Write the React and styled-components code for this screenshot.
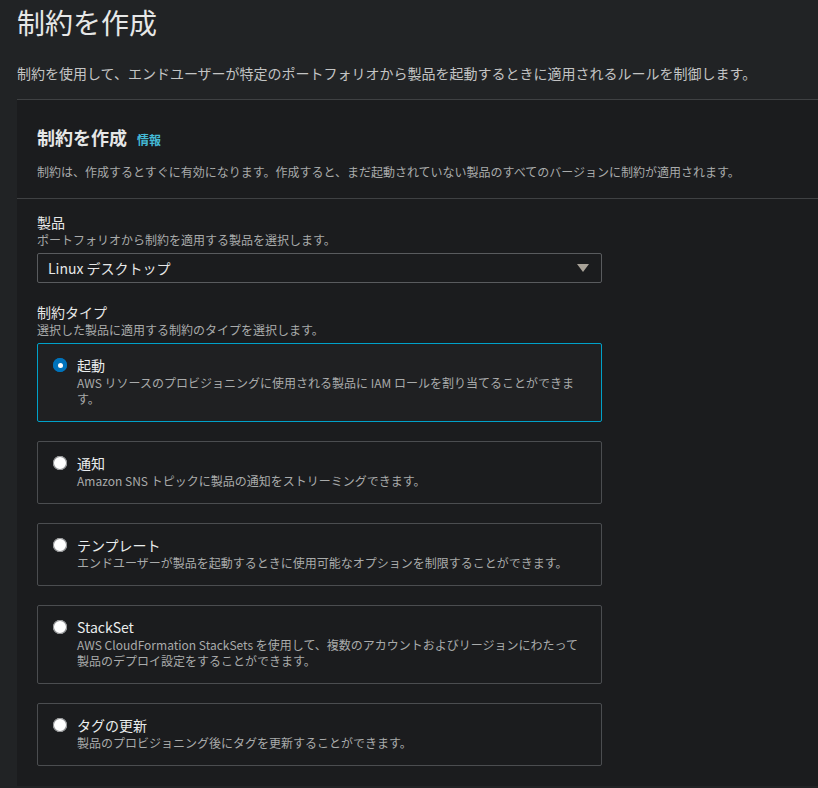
import React, { useState } from "react";
import styled, { createGlobalStyle } from "styled-components";

const GlobalStyle = createGlobalStyle`
  html, body {
    margin: 0;
    padding: 0;
    background: #212325;
  }
  body {
    font-family: "Noto Sans CJK JP", "Noto Sans", sans-serif;
    color: #d5d8d8;
  }
  * { box-sizing: border-box; }
`;

const Page = styled.div`
  padding-left: 17px;
  min-height: 788px;
`;

const Title = styled.h1`
  margin: 5px 0 0;
  font-size: 28px;
  line-height: 34px;
  font-weight: 400;
  color: #e6e7e7;
`;

const Lead = styled.p`
  margin: 24px 0 16px;
  font-size: 14px;
  line-height: 20px;
  color: #c3c4c4;
`;

const Panel = styled.section`
  background: #1b1c1e;
  border-top: 1px solid #3f4143;
  padding-bottom: 20px;
`;

const PanelHeader = styled.div`
  padding: 25px 20px 18px;
  border-bottom: 1px solid #3f4143;
`;

const PanelTitle = styled.h2`
  margin: 0;
  display: flex;
  align-items: baseline;
  gap: 10px;
  font-size: 18px;
  line-height: 24px;
  font-weight: 700;
  color: #e6e7e7;
`;

const InfoLink = styled.a`
  font-size: 12px;
  font-weight: 700;
  color: #44b9d6;
  text-decoration: none;
`;

const PanelDesc = styled.p`
  margin: 12px 0 0;
  font-size: 12px;
  line-height: 16px;
  color: #a9abab;
`;

const Form = styled.div`
  padding: 13px 20px 0;
  width: 605px;
`;

const Field = styled.div`
  margin-bottom: ${(p) => p.$gap || 0}px;
`;

const Label = styled.div`
  font-size: 14px;
  line-height: 20px;
  color: #e6e7e7;
`;

const Hint = styled.div`
  font-size: 12px;
  line-height: 16px;
  color: #a9abab;
  margin-bottom: 5px;
`;

const Select = styled.div`
  height: 30px;
  display: flex;
  align-items: center;
  justify-content: space-between;
  padding: 0 12px 0 10px;
  border: 1px solid #595b5e;
  border-radius: 2px;
  font-size: 14px;
  color: #e6e7e7;
`;

const Caret = styled.span`
  width: 0;
  height: 0;
  border-left: 6px solid transparent;
  border-right: 6px solid transparent;
  border-top: 8px solid #a8a298;
`;

const Cards = styled.div`
  display: flex;
  flex-direction: column;
  gap: 19px;
`;

const Card = styled.label`
  display: flex;
  align-items: flex-start;
  gap: 10px;
  padding: 11px 20px 14px 15px;
  border: 1px solid ${(p) => (p.$checked ? "#00a1c9" : "#4b4d50")};
  border-radius: 2px;
  background: ${(p) => (p.$checked ? "#1f2022" : "#1b1c1e")};
  cursor: pointer;
`;

const Radio = styled.span`
  flex: none;
  width: 14px;
  height: 14px;
  margin-top: 3px;
  border-radius: 50%;
  background: ${(p) => (p.$checked ? "#0073bb" : "#ffffff")};
  box-shadow: 0 0 0 1px ${(p) => (p.$checked ? "#0073bb" : "#8a8c8e")} inset;
  display: flex;
  align-items: center;
  justify-content: center;
  &::after {
    content: "";
    width: 5px;
    height: 5px;
    border-radius: 50%;
    background: #ffffff;
    display: ${(p) => (p.$checked ? "block" : "none")};
  }
`;

const CardText = styled.div`
  flex: 1;
`;

const CardTitle = styled.div`
  font-size: 14px;
  line-height: 20px;
  color: #eaeded;
`;

const CardDesc = styled.div`
  font-size: 12px;
  line-height: 16px;
  color: #a9abab;
`;

const options = [
  {
    id: "launch",
    title: "起動",
    desc: "AWS リソースのプロビジョニングに使用される製品に IAM ロールを割り当てることができます。",
  },
  {
    id: "notify",
    title: "通知",
    desc: "Amazon SNS トピックに製品の通知をストリーミングできます。",
  },
  {
    id: "template",
    title: "テンプレート",
    desc: "エンドユーザーが製品を起動するときに使用可能なオプションを制限することができます。",
  },
  {
    id: "stackset",
    title: "StackSet",
    desc: "AWS CloudFormation StackSets を使用して、複数のアカウントおよびリージョンにわたって製品のデプロイ設定をすることができます。",
  },
  {
    id: "tags",
    title: "タグの更新",
    desc: "製品のプロビジョニング後にタグを更新することができます。",
  },
];

const App = () => {
  const [selected, setSelected] = useState("launch");

  return (
    <>
      <GlobalStyle />
      <Page>
        <Title>制約を作成</Title>
        <Lead>
          制約を使用して、エンドユーザーが特定のポートフォリオから製品を起動するときに適用されるルールを制御します。
        </Lead>
        <Panel>
          <PanelHeader>
            <PanelTitle>
              制約を作成 <InfoLink href="#">情報</InfoLink>
            </PanelTitle>
            <PanelDesc>
              制約は、作成するとすぐに有効になります。作成すると、まだ起動されていない製品のすべてのバージョンに制約が適用されます。
            </PanelDesc>
          </PanelHeader>
          <Form>
            <Field $gap={19}>
              <Label>製品</Label>
              <Hint>ポートフォリオから制約を適用する製品を選択します。</Hint>
              <Select>
                <span>Linux デスクトップ</span>
                <Caret />
              </Select>
            </Field>
            <Field>
              <Label>制約タイプ</Label>
              <Hint>選択した製品に適用する制約のタイプを選択します。</Hint>
              <Cards>
                {options.map((o) => (
                  <Card
                    key={o.id}
                    $checked={selected === o.id}
                    onClick={() => setSelected(o.id)}
                  >
                    <Radio $checked={selected === o.id} />
                    <CardText>
                      <CardTitle>{o.title}</CardTitle>
                      <CardDesc>{o.desc}</CardDesc>
                    </CardText>
                  </Card>
                ))}
              </Cards>
            </Field>
          </Form>
        </Panel>
      </Page>
    </>
  );
};

export default App;
